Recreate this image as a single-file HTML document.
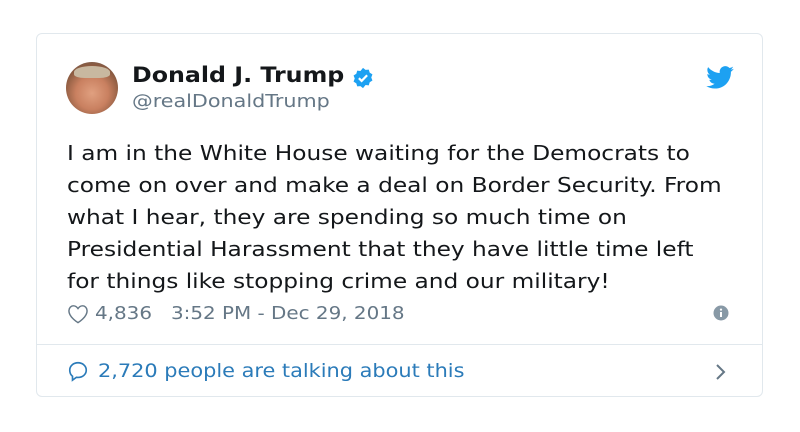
<!DOCTYPE html>
<html><head><meta charset="utf-8"><style>
body{margin:0;width:800px;height:432px;background:#fff;font-family:"DejaVu Sans","Liberation Sans",sans-serif;position:relative;overflow:hidden}
.card{position:absolute;left:36px;top:33px;width:727px;height:364px;border:1px solid #e1e8ed;border-radius:6px;box-sizing:border-box}
.av{position:absolute;left:66px;top:62px;width:52px;height:52px;border-radius:50%;background:radial-gradient(circle at 50% 60%,#e0a080 0%,#c98060 40%,#8a5a40 70%,#6b6b6b 100%);overflow:hidden}
.av:before{content:"";position:absolute;left:8px;top:4px;width:36px;height:12px;border-radius:50% 50% 30% 30%;background:#c8b8a0}
.s{transform-origin:0 0;white-space:nowrap}
.name{position:absolute;left:132px;top:63px;font-size:21px;font-weight:bold;color:#14171a;transform:scaleX(1.13)}
.handle{position:absolute;left:132px;top:91px;font-size:18px;color:#657786;transform:scaleX(1.15)}
.text{position:absolute;left:67px;top:137px;font-size:20px;line-height:32px;color:#14171a;transform:scaleX(1.163)}
.meta{position:absolute;left:95px;top:303px;font-size:18px;color:#657786;font-family:"DejaVu Sans Condensed","DejaVu Sans",sans-serif;transform:scaleX(1.23)}
.div{position:absolute;left:37px;top:344px;width:725px;height:1px;background:#e1e8ed}
.talk{position:absolute;left:98px;top:360px;font-size:19px;color:#2b7bb9;font-family:"DejaVu Sans Condensed","DejaVu Sans",sans-serif;transform:scaleX(1.22)}
</style></head><body>
<div class="card"></div>
<div class="av"></div>
<div class="name s">Donald J. Trump</div>
<svg style="position:absolute;left:352px;top:67px" width="22" height="22" viewBox="0 0 24 24"><path fill="#1da1f2" d="M12 1l2.8 2.2 3.5-.4 1 3.4 3 1.9-1.3 3.3 1.3 3.3-3 1.9-1 3.4-3.5-.4L12 23l-2.8-2.2-3.5.4-1-3.4-3-1.9L3 12.6 1.7 9.3l3-1.9 1-3.4 3.5.4z"/><path d="M7.5 12.2l3 3 6-6.2" stroke="#fff" stroke-width="2.4" fill="none"/></svg>
<div class="handle s">@realDonaldTrump</div>
<svg style="position:absolute;left:706px;top:66px" width="28" height="23" viewBox="0 0 24 20"><path fill="#1da1f2" d="M24 2.4c-.9.4-1.8.7-2.8.8 1-.6 1.8-1.6 2.2-2.7-1 .6-2 1-3.1 1.2C19.3.7 18 .1 16.6.1c-2.7 0-4.9 2.2-4.9 4.9 0 .4 0 .8.1 1.1C7.7 5.900 4.1 4 1.7 1 1.2 1.8 1 2.6 1 3.5c0 1.7.9 3.2 2.2 4.1-.8 0-1.6-.2-2.2-.6v.1c0 2.4 1.7 4.4 3.9 4.8-.4.1-.8.2-1.3.2-.3 0-.6 0-.9-.1.6 2 2.4 3.4 4.6 3.4-1.7 1.3-3.8 2.1-6.1 2.1-.4 0-.8 0-1.2-.1 2.2 1.4 4.8 2.2 7.5 2.2 9.1 0 14-7.5 14-14v-.6c1-.7 1.8-1.6 2.5-2.6z"/></svg>
<div class="text s">I am in the White House waiting for the Democrats to<br>come on over and make a deal on Border Security. From<br>what I hear, they are spending so much time on<br>Presidential Harassment that they have little time left<br>for things like stopping crime and our military!</div>
<svg style="position:absolute;left:67px;top:304px" width="22" height="20" viewBox="0 0 24 22"><path d="M12 20.5S2 14.5 2 7.5C2 4.5 4.3 2 7 2c2.2 0 3.8 1.3 5 3 1.2-1.7 2.8-3 5-3 2.7 0 5 2.5 5 5.5 0 7-10 13-10 13z" fill="none" stroke="#657786" stroke-width="1.6"/></svg>
<div class="meta s">4,836 &nbsp;&nbsp;3:52 PM - Dec 29, 2018</div>
<svg style="position:absolute;left:713px;top:305px" width="16" height="16" viewBox="0 0 16 16"><circle cx="8" cy="8" r="7.5" fill="#8899a6"/><rect x="7" y="7" width="2" height="5" fill="#fff"/><circle cx="8" cy="4.6" r="1.1" fill="#fff"/></svg>
<div class="div"></div>
<svg style="position:absolute;left:67px;top:360px" width="22" height="22" viewBox="0 0 24 24"><path d="M12 3c5 0 9 3.4 9 8s-4 8-9 8c-.6 0-1.2 0-1.8-.1L6 22v-4.3C4 16.2 3 13.8 3 11c0-4.6 4-8 9-8z" fill="none" stroke="#2b7bb9" stroke-width="1.8"/></svg>
<div class="talk s">2,720 people are talking about this</div>
<svg style="position:absolute;left:714px;top:362px" width="14" height="20" viewBox="0 0 14 20"><path d="M3 3l7 7-7 7" fill="none" stroke="#657786" stroke-width="2"/></svg>
</body></html>
